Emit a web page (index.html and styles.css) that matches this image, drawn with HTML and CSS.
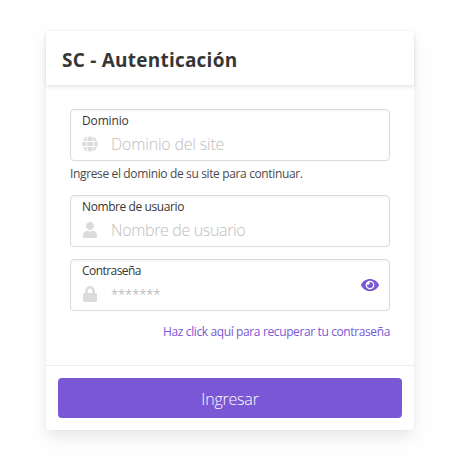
FILE: index.html
```html
<!DOCTYPE html>
<html lang="es">
<head>
<meta charset="utf-8">
<title>SC - Autenticación</title>
<link rel="stylesheet" href="styles.css">
</head>
<body>
<main class="card">
  <header class="card-header"><h1 class="title">SC - Autenticación</h1></header>
  <section class="card-content">
    <div class="field">
      <label class="label label-domain">Dominio</label>
      <div class="control">
        <svg class="icon" viewBox="0 0 496 512"><path d="M336.500 160C322 70.700 287.800 8 248 8s-74 62.700-88.500 152h177zM152 256c0 22.200 1.200 43.500 3.300 64h185.300c2.100-20.500 3.300-41.800 3.300-64s-1.200-43.500-3.300-64H155.300c-2.100 20.500-3.300 41.800-3.300 64zm324.700-96c-28.600-67.900-86.500-120.400-158-141.600 24.400 33.800 41.200 84.700 50 141.600h108zM177.200 18.400C105.800 39.600 47.800 92.100 19.300 160h108c8.700-56.900 25.500-107.800 49.900-141.600zM487.400 192H372.700c2.100 21 3.300 42.500 3.300 64s-1.200 43-3.300 64h114.600c5.500-20.500 8.600-41.800 8.600-64s-3.100-43.500-8.500-64zM120 256c0-21.500 1.200-43 3.300-64H8.600C3.200 212.500 0 233.800 0 256s3.200 43.500 8.600 64h114.600c-2-21-3.200-42.500-3.200-64zm39.500 96c14.500 89.300 48.700 152 88.500 152s74-62.700 88.500-152h-177zm159.300 141.600c71.400-21.200 129.400-73.700 158-141.600h-108c-8.800 56.900-25.600 107.800-50 141.600zM19.300 352c28.600 67.900 86.500 120.400 158 141.600-24.400-33.800-41.200-84.700-50-141.600h-108z"/></svg>
        <span class="placeholder placeholder-domain">Dominio del site</span>
      </div>
    </div>
    <p class="help">Ingrese el dominio de su site para continuar.</p>
    <div class="field">
      <label class="label">Nombre de usuario</label>
      <div class="control">
        <svg class="icon" viewBox="0 0 448 512"><path d="M224 256c70.700 0 128-57.300 128-128S294.700 0 224 0 96 57.300 96 128s57.300 128 128 128zm89.600 32h-16.700c-22.200 10.200-46.900 16-72.900 16s-50.600-5.800-72.900-16h-16.700C60.200 288 0 348.200 0 422.400V464c0 26.500 21.500 48 48 48h352c26.500 0 48-21.500 48-48v-41.600c0-74.200-60.200-134.400-134.400-134.400z"/></svg>
        <span class="placeholder">Nombre de usuario</span>
      </div>
    </div>
    <div class="field">
      <label class="label label-password">Contraseña</label>
      <div class="control">
        <svg class="icon" viewBox="0 0 448 512"><path d="M400 224h-24v-72C376 68.200 307.800 0 224 0S72 68.200 72 152v72H48c-26.500 0-48 21.500-48 48v192c0 26.500 21.500 48 48 48h352c26.500 0 48-21.500 48-48V272c0-26.500-21.500-48-48-48zm-104 0H152v-72c0-39.700 32.300-72 72-72s72 32.300 72 72v72z"/></svg>
        <span class="placeholder placeholder-password">*******</span>
      </div>
      <svg class="eye" viewBox="0 0 576 512"><path fill-rule="evenodd" d="M572.500 241.400C518.300 135.600 410.900 64 288 64S57.700 135.600 3.500 241.400a32.400 32.400 0 0 0 0 29.200C57.700 376.400 165.100 448 288 448s230.300-71.600 284.500-177.400a32.400 32.400 0 0 0 0-29.200zM288 396a140 140 0 1 1 0-280 140 140 0 0 1 0 280zm0-236a95.300 95.300 0 0 0-25.300 3.800 44 44 0 0 1-66.900 66.900A95.800 95.800 0 1 0 288 160z"/></svg>
    </div>
    <a class="recover">Haz click aquí para recuperar tu contraseña</a>
  </section>
  <footer class="card-footer"><button class="submit">Ingresar</button></footer>
</main>
</body>
</html>
```
FILE: styles.css
```css
* { box-sizing: border-box; }
body {
  margin: 0;
  padding: 31px 49px 27px 46px;
  background: #fefefe;
  color: #363636;
  font-family: "Open Sans", "Noto Sans", sans-serif;
}
.card {
  width: 368px;
  height: 399px;
  display: flex;
  flex-direction: column;
  background: #fff;
  border-radius: 4px;
  box-shadow: 0 8px 16px -2px rgba(10, 10, 10, .1), 0 0 0 1px rgba(10, 10, 10, .015);
}
.card-header {
  height: 54px;
  padding: 0 16px;
  display: flex;
  align-items: center;
  box-shadow: 0 2px 4px rgba(10, 10, 10, .1);
}
.title {
  margin: 4px 0 0;
  font-size: 19px;
  line-height: 24px;
  font-weight: 700;
  letter-spacing: .23px;
  white-space: nowrap;
}
.card-content {
  height: 280px;
  padding: 24px 24px 0;
  display: flex;
  flex-direction: column;
}
.field {
  position: relative;
  height: 52px;
  flex: none;
  padding: 3px 11px 0;
  border: 1px solid #dbdbdb;
  border-radius: 4px;
  box-shadow: inset 0 1px 2px rgba(10, 10, 10, .05);
}
.field + .field { margin-top: 12px; }
.label {
  display: block;
  font-size: 12px;
  line-height: 16px;
  letter-spacing: -.41px;
  white-space: nowrap;
}
.label-domain { letter-spacing: -.15px; }
.label-password { letter-spacing: -.55px; }
.control {
  display: flex;
  align-items: center;
  height: 30px;
}
.icon {
  width: 16px;
  height: 16px;
  fill: #dbdbdb;
}
.placeholder {
  margin-left: 13px;
  color: #bdbdbd;
  font-size: 16px;
  line-height: 24px;
  font-weight: 300;
  letter-spacing: -.35px;
  white-space: nowrap;
}
.placeholder-domain { letter-spacing: -.2px; }
.placeholder-password {
  font-size: 13px;
  font-weight: 400;
  letter-spacing: -.1px;
}
.help {
  margin: 4px 0 12px;
  height: 18px;
  font-size: 12px;
  line-height: 18px;
  letter-spacing: -.36px;
  color: #4a4a4a;
  white-space: nowrap;
}
.eye {
  position: absolute;
  right: 10px;
  top: 17px;
  width: 18px;
  height: 16px;
  fill: #7957d5;
}
.recover {
  margin-top: 12px;
  align-self: flex-end;
  font-size: 12px;
  line-height: 18px;
  letter-spacing: -.38px;
  color: #7957d5;
  white-space: nowrap;
}
.card-footer {
  height: 65px;
  padding: 12px;
  border-top: 1px solid #ededed;
}
.submit {
  display: block;
  width: 100%;
  height: 40px;
  padding: 1px 0 0;
  border: 0;
  border-radius: 4px;
  background: #7957d5;
  color: #fff;
  font: 300 16px/24px "Open Sans", "Noto Sans", sans-serif;
  letter-spacing: -.2px;
}
```
